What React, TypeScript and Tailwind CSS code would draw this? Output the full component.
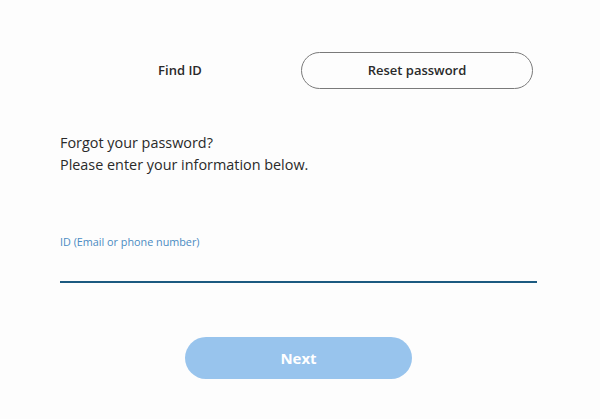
export default function App() {
  return (
    <div className="w-[600px] h-[419px] bg-[#fdfdfd] font-['Open_Sans',sans-serif] text-[#252525]">
      <div className="w-[477px] ml-[60px] pt-[52px]">
        <div className="flex gap-[6px] w-[468px] ml-[5px]">
          <button className="flex-1 h-[37px] rounded-full text-[13px] font-semibold text-[#2a2a2a]">
            Find ID
          </button>
          <button className="flex-1 h-[37px] rounded-full border border-[#7a7a7a] text-[13px] font-semibold text-[#2a2a2a]">
            Reset password
          </button>
        </div>

        <p className="mt-[43px] text-[14.4px] leading-[22px] text-[#2a2a2a]">
          Forgot your password?
          <br />
          Please enter your information below.
        </p>

        <label className="block mt-[59px] text-[10.8px] leading-[14px] text-[#4a8bc2]">
          ID (Email or phone number)
        </label>
        <input
          type="text"
          className="block w-full h-[34px] border-b-2 border-[#1c5a80] bg-transparent outline-none text-[14px]"
        />

        <button className="block mx-auto mt-[54px] w-[227px] h-[42px] rounded-full bg-[#98c4ed] text-white text-[15px] font-bold">
          Next
        </button>
      </div>
    </div>
  );
}
